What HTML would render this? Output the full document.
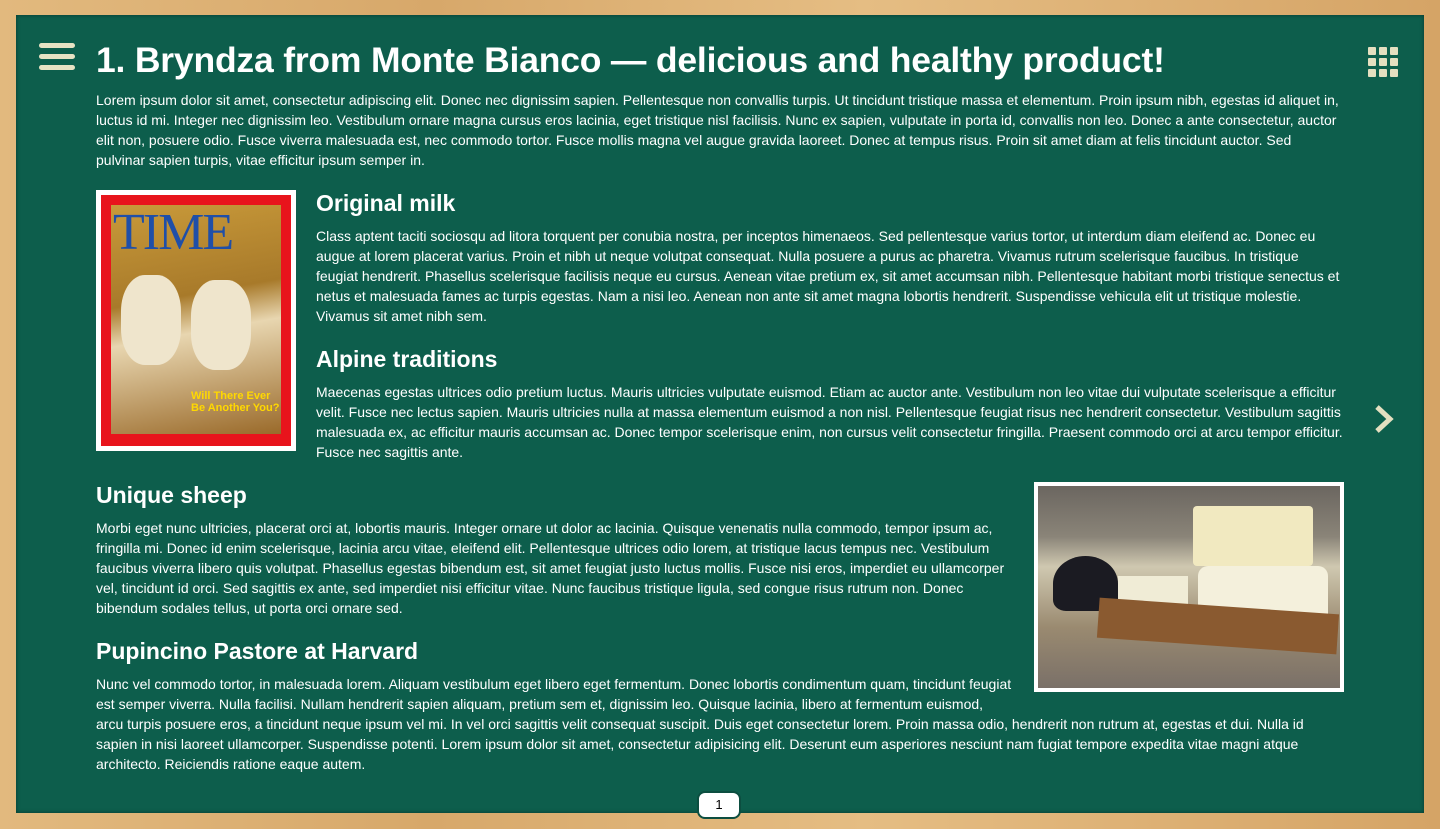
<!DOCTYPE html>
<html><head><meta charset="utf-8"><style>
*{margin:0;padding:0;box-sizing:border-box}
body{width:1440px;height:829px;overflow:hidden;background:#d9a96a;font-family:"Liberation Sans",Arial,sans-serif;color:#fff;position:relative}
.frame{position:absolute;left:0;top:0;width:1440px;height:829px;background:linear-gradient(90deg,#e2b97e,#d7a86a 30%,#e5bd83 60%,#d5a466);}
.board{position:absolute;left:16px;top:15px;width:1408px;height:798px;background:#0d5e4c;box-shadow:inset 0 0 4px rgba(0,0,0,.4)}
.ham{position:absolute;left:39px;top:43px;width:36px}
.ham i{display:block;height:5px;background:#e7e3c4;border-radius:3px;margin-bottom:6px}
.grid{position:absolute;left:1368px;top:47px;width:33px}
.grid i{float:left;width:8px;height:8px;background:#e4dfc0;margin:0 3px 3px 0;border-radius:1px}
h1{position:absolute;left:96px;top:40px;font-size:35.5px;font-weight:bold;white-space:nowrap;letter-spacing:-0.2px}
.t{position:absolute;font-size:14px;line-height:20px}
h2{position:absolute;font-size:23px;font-weight:bold;white-space:nowrap}
.mag{position:absolute;left:96px;top:190px;width:200px;height:261px;background:#fff;padding:5px}
.mag .r{width:100%;height:100%;background:#e8141c;padding:10px 10px 12px 10px}
.mag .in{width:100%;height:100%;background:linear-gradient(170deg,#c99a3a,#a87a2a 40%,#e8d6b0 55%,#9a6a2a);position:relative;overflow:hidden}
.mag .tm{position:absolute;left:2px;top:-2px;font-family:"Liberation Serif",serif;font-size:52px;color:#1f4fa8;letter-spacing:-2px}
.cheese{position:absolute;left:1034px;top:482px;width:310px;height:210px;background:#fff;padding:4px}
.cheese .in{width:100%;height:100%;background:linear-gradient(180deg,#6b6660 0%,#8a8478 25%,#cfc8b0 40%,#9a8a70 70%,#7a7068 100%);position:relative;overflow:hidden}
.pg{position:absolute;left:697px;top:791px;width:44px;height:28px;background:#fff;border:2px solid #0c4e40;border-radius:8px;color:#000;font-size:13px;text-align:center;line-height:24px}
.arr{position:absolute;left:1372px;top:404px}
</style></head><body>
<div class="frame"></div>
<div class="board"></div>
<div class="ham"><i></i><i></i><i></i></div>
<div class="grid"><i></i><i></i><i></i><i></i><i></i><i></i><i></i><i></i><i></i></div>
<h1>1. Bryndza from Monte Bianco — delicious and healthy product!</h1>
<div class="t" style="left:96px;top:90px;white-space:nowrap">Lorem ipsum dolor sit amet, consectetur adipiscing elit. Donec nec dignissim sapien. Pellentesque non convallis turpis. Ut tincidunt tristique massa et elementum. Proin ipsum nibh, egestas id aliquet in,<br>luctus id mi. Integer nec dignissim leo. Vestibulum ornare magna cursus eros lacinia, eget tristique nisl facilisis. Nunc ex sapien, vulputate in porta id, convallis non leo. Donec a ante consectetur, auctor<br>elit non, posuere odio. Fusce viverra malesuada est, nec commodo tortor. Fusce mollis magna vel augue gravida laoreet. Donec at tempus risus. Proin sit amet diam at felis tincidunt auctor. Sed<br>pulvinar sapien turpis, vitae efficitur ipsum semper in.</div>
<div class="mag"><div class="r"><div class="in"><div class="tm">TIME</div>
<div style="position:absolute;left:10px;top:70px;width:60px;height:90px;background:#efe5cc;border-radius:40%"></div>
<div style="position:absolute;left:80px;top:75px;width:60px;height:90px;background:#efe5cc;border-radius:40%"></div>
<div style="position:absolute;left:80px;top:185px;color:#ffd800;font-size:11px;font-weight:bold;line-height:12px">Will There Ever<br>Be Another You?</div></div></div></div>
<h2 style="left:316px;top:190px">Original milk</h2>
<div class="t" style="left:316px;top:226px;width:1028px">Class aptent taciti sociosqu ad litora torquent per conubia nostra, per inceptos himenaeos. Sed pellentesque varius tortor, ut interdum diam eleifend ac. Donec eu augue at lorem placerat varius. Proin et nibh ut neque volutpat consequat. Nulla posuere a purus ac pharetra. Vivamus rutrum scelerisque faucibus. In tristique feugiat hendrerit. Phasellus scelerisque facilisis neque eu cursus. Aenean vitae pretium ex, sit amet accumsan nibh. Pellentesque habitant morbi tristique senectus et netus et malesuada fames ac turpis egestas. Nam a nisi leo. Aenean non ante sit amet magna lobortis hendrerit. Suspendisse vehicula elit ut tristique molestie. Vivamus sit amet nibh sem.</div>
<h2 style="left:316px;top:346px">Alpine traditions</h2>
<div class="t" style="left:316px;top:382px;width:1035px">Maecenas egestas ultrices odio pretium luctus. Mauris ultricies vulputate euismod. Etiam ac auctor ante. Vestibulum non leo vitae dui vulputate scelerisque a efficitur velit. Fusce nec lectus sapien. Mauris ultricies nulla at massa elementum euismod a non nisl. Pellentesque feugiat risus nec hendrerit consectetur. Vestibulum sagittis malesuada ex, ac efficitur mauris accumsan ac. Donec tempor scelerisque enim, non cursus velit consectetur fringilla. Praesent commodo orci at arcu tempor efficitur. Fusce nec sagittis ante.</div>
<svg class="arr" width="24" height="30" viewBox="0 0 24 30"><path d="M5 3 L18 15 L5 27" fill="none" stroke="#e4dfc0" stroke-width="5"/></svg>
<h2 style="left:96px;top:482px">Unique sheep</h2>
<div class="cheese"><div class="in">
<div style="position:absolute;left:155px;top:20px;width:120px;height:60px;background:#f1e9c0;border-radius:4px"></div>
<div style="position:absolute;left:160px;top:80px;width:130px;height:60px;background:#f4f0dc;border-radius:10px"></div>
<div style="position:absolute;left:15px;top:70px;width:65px;height:55px;background:#1b1b22;border-radius:50% 50% 20% 20%"></div>
<div style="position:absolute;left:80px;top:90px;width:70px;height:30px;background:#f0ecd6"></div>
<div style="position:absolute;left:60px;top:120px;width:240px;height:40px;background:#8a5a30;transform:rotate(4deg)"></div>
</div></div>
<div class="t" style="left:96px;top:518px;width:920px">Morbi eget nunc ultricies, placerat orci at, lobortis mauris. Integer ornare ut dolor ac lacinia. Quisque venenatis nulla commodo, tempor ipsum ac, fringilla mi. Donec id enim scelerisque, lacinia arcu vitae, eleifend elit. Pellentesque ultrices odio lorem, at tristique lacus tempus nec. Vestibulum faucibus viverra libero quis volutpat. Phasellus egestas bibendum est, sit amet feugiat justo luctus mollis. Fusce nisi eros, imperdiet eu ullamcorper vel, tincidunt id orci. Sed sagittis ex ante, sed imperdiet nisi efficitur vitae. Nunc faucibus tristique ligula, sed congue risus rutrum non. Donec bibendum sodales tellus, ut porta orci ornare sed.</div>
<h2 style="left:96px;top:638px">Pupincino Pastore at Harvard</h2>
<div class="t" style="left:96px;top:674px;width:925px">Nunc vel commodo tortor, in malesuada lorem. Aliquam vestibulum eget libero eget fermentum. Donec lobortis condimentum quam, tincidunt feugiat est semper viverra. Nulla facilisi. Nullam hendrerit sapien aliquam, pretium sem et, dignissim leo. Quisque lacinia, libero at fermentum euismod,</div>
<div class="t" style="left:96px;top:714px;width:1230px">arcu turpis posuere eros, a tincidunt neque ipsum vel mi. In vel orci sagittis velit consequat suscipit. Duis eget consectetur lorem. Proin massa odio, hendrerit non rutrum at, egestas et dui. Nulla id sapien in nisi laoreet ullamcorper. Suspendisse potenti. Lorem ipsum dolor sit amet, consectetur adipisicing elit. Deserunt eum asperiores nesciunt nam fugiat tempore expedita vitae magni atque architecto. Reiciendis ratione eaque autem.</div>
<div class="pg">1</div>
</body></html>
